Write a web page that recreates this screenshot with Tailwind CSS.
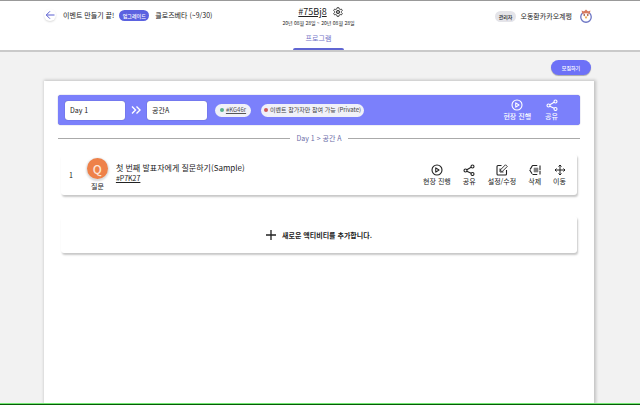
<!DOCTYPE html>
<html lang="ko">
<head>
<meta charset="utf-8">
<meta name="viewport" content="width=device-width, initial-scale=1">
<title>프로그램</title>
<script src="https://cdn.jsdelivr.net/npm/@tailwindcss/browser@4"></script>
</head>
<body class="flex min-h-screen flex-col bg-[#f2f2f2] font-['Noto_Sans_CJK_KR','Noto_Sans',sans-serif] text-[7px] leading-[10px] text-[#222]">
<svg class="hidden" aria-hidden="true">
  <symbol id="play" viewBox="0 0 24 24" fill="none" stroke="currentColor" stroke-width="2.2"><circle cx="12" cy="12" r="10"/><path d="M9.5 7.8v8.4l6.5-4.2z" stroke-linejoin="round"/></symbol>
  <symbol id="share" viewBox="0 0 24 24" fill="none" stroke="currentColor" stroke-width="2.2"><circle cx="5" cy="13" r="3"/><circle cx="19" cy="5" r="3"/><circle cx="19" cy="20" r="3"/><path d="M7.7 11.5 16.3 6.5M7.6 14.5l8.8 4"/></symbol>
</svg>

<header class="border-t border-b-2 border-t-[#999] border-b-[#cacaca] bg-white">
  <div class="grid grid-cols-[1fr_auto_1fr] items-start pr-[47px] pl-11">
    <div class="flex items-center pt-2 leading-[12px]">
      <button type="button" aria-label="뒤로" class="flex size-3 items-center justify-center rounded-full text-[#5a5fd0] shadow-[0_1px_2px_rgba(0,0,0,0.15)]">
        <svg class="size-[10px]" viewBox="0 0 20 20" fill="none" stroke="currentColor" stroke-width="2"><path d="M19 10H3M10 2.500 2.500 10l7.500 7.500"/></svg>
      </button>
      <span class="ml-[7px] whitespace-nowrap">이벤트 만들기 끝!</span>
      <button type="button" class="ml-[5px] h-[11px] w-[30px] rounded-full bg-[#5b62e0] text-[5px] leading-[11px] font-medium whitespace-nowrap text-white">업그레이드</button>
      <span class="ml-[6px] whitespace-nowrap">클로즈베타 (~9/30)</span>
    </div>
    <div class="flex flex-col items-center">
      <div class="flex items-center gap-[6px] pt-1 pl-1">
        <a href="#" class="text-[9px] leading-[14px] underline underline-offset-1">#75Bj8</a>
        <button type="button" aria-label="설정" class="size-[10px]">
          <svg class="size-[10px]" viewBox="0 0 24 24" fill="none" stroke="currentColor" stroke-width="2"><path d="M10 1.500h4l.8 3 2.500 1.400 3-.8 2 3.400L20.200 10.700v2.600l2.100 2.200-2 3.400-3-.8-2.500 1.400-.8 3h-4l-.8-3-2.500-1.400-3 .8-2-3.400 2.100-2.200v-2.600L1.700 8.500l2-3.400 3 .8 2.500-1.400z"/><circle cx="12" cy="12" r="4"/><circle cx="12" cy="12" r="1"/></svg>
        </button>
      </div>
      <p class="text-[5px] leading-[7px] whitespace-nowrap">20년 08월 28일 ~ 20년 08월 28일</p>
      <nav class="mt-[7px]">
        <a href="#" class="flex w-[51px] flex-col items-center gap-[5px] text-[#7374c8]">
          <span>프로그램</span>
          <span class="h-[2px] w-full rounded-t-sm bg-[#6066d2]"></span>
        </a>
      </nav>
    </div>
    <div class="flex items-center justify-end pt-2 leading-[12px]">
      <span class="rounded-full bg-[#e4e4e9] px-1 text-[5px] leading-[11px] font-medium whitespace-nowrap">관리자</span>
      <span class="ml-1 whitespace-nowrap">오동환카카오계쩡</span>
      <svg class="ml-[7px] size-[14px]" viewBox="0 0 28 28" aria-hidden="true"><circle cx="14" cy="16" r="10.500" fill="#fff" stroke="#6d76c4" stroke-width="2.600"/><path d="M5 3l5 2 4-4 4 4 5-2-2 7q-7-3-14 0z" fill="#d97b5e"/><circle cx="10.500" cy="12" r="1.800" fill="#a8644e"/><circle cx="17.500" cy="12" r="1.800" fill="#a8644e"/><path d="M11 15h6l-3 5z" fill="#e9a94b"/></svg>
    </div>
  </div>
</header>

<main class="flex grow flex-col pr-[46px] pl-11">
  <div class="flex justify-end pt-2 pr-[3px] pb-[6px]">
    <button type="button" class="h-[15px] w-10 rounded-full bg-[#6d71f7] text-[5px] leading-[15px] font-medium text-white shadow-[0_1px_1px_rgba(0,0,0,0.3)]">모집하기</button>
  </div>

  <div class="grow bg-white px-[14px] pt-[14px] shadow-[1px_0_3px_1px_rgba(0,0,0,0.2)]">
    <section class="flex h-[30px] items-center rounded-[3px] bg-[#7b80fb] pr-[22px] pl-[7px] shadow-[0_0_1px_rgba(60,60,140,0.8)]">
      <input aria-label="일차" value="Day 1" class="h-[19px] w-[60px] rounded-[3px] bg-white px-[5px] text-[7px] shadow-[0_0_1px_rgba(0,0,0,0.5)]">
      <svg class="mx-[6px] size-[10px] text-white" viewBox="0 0 20 20" fill="none" stroke="currentColor" stroke-width="2.800" aria-hidden="true"><path d="M2 3l7 7-7 7M11 3l7 7-7 7"/></svg>
      <input aria-label="공간" value="공간A" class="h-[19px] w-[60px] rounded-[3px] bg-white px-[5px] text-[7px] shadow-[0_0_1px_rgba(0,0,0,0.5)]">
      <a href="#" class="ml-2 flex h-[13px] w-9 items-center justify-center gap-[2px] rounded-full bg-[#f0f1f8] text-[6px] text-[#555]"><span class="size-1 rounded-full bg-[#55b08c]"></span><span class="underline">#KG46r</span></a>
      <span class="ml-[10px] flex h-[13px] w-[103px] items-center justify-center gap-[2px] rounded-full bg-[#f0f1f8] text-[6px] whitespace-nowrap text-[#444]"><span class="size-1 rounded-full bg-[#cf5a5a]"></span>이벤트 참가자만 참여 가능 (Private)</span>
      <div class="ml-auto flex gap-[14px] font-medium whitespace-nowrap text-white">
        <button type="button" class="flex flex-col items-center"><svg class="size-3"><use href="#play"/></svg>현장 진행</button>
        <button type="button" class="flex flex-col items-center"><svg class="size-3"><use href="#share"/></svg>공유</button>
      </div>
    </section>

    <h2 class="mt-2 flex items-center gap-[6px] text-[7px] text-[#6c6da8]"><span class="h-px grow bg-[#aaa]"></span>Day 1 &gt; 공간 A<span class="h-px grow bg-[#aaa]"></span></h2>

    <article class="mx-[3px] mt-[11px] flex h-[41px] items-center rounded-[3px] bg-white pr-[11px] pl-2 shadow-[1px_2px_2px_rgba(0,0,0,0.22)]">
      <span>1</span>
      <div class="ml-[14px] flex flex-col items-center gap-[2px]">
        <span class="flex size-[21px] items-center justify-center rounded-full bg-[#ee8149] text-[12px] leading-[20px] font-medium text-[#fde6d8] shadow-[0_1px_2px_1px_rgba(0,0,0,0.15)]">Q</span>
        <span>질문</span>
      </div>
      <div class="mb-1 ml-2">
        <h3 class="text-[8px] leading-[10px] whitespace-nowrap">첫 번째 발표자에게 질문하기(Sample)</h3>
        <a href="#" class="block leading-[10px] underline">#P7K27</a>
      </div>
      <div class="ml-auto flex gap-3 whitespace-nowrap">
        <button type="button" class="flex flex-col items-center"><svg class="size-3"><use href="#play"/></svg>현장 진행</button>
        <button type="button" class="flex flex-col items-center"><svg class="size-3"><use href="#share"/></svg>공유</button>
        <button type="button" class="flex flex-col items-center"><svg class="size-3" viewBox="0 0 24 24" fill="none" stroke="currentColor" stroke-width="2.200"><path d="M11 3H4a2 2 0 0 0-2 2v15a2 2 0 0 0 2 2h15a2 2 0 0 0 2-2v-8"/><path d="M19 1.500 22.500 5 12 15.500 8.500 12zM8 9v7h7" stroke-width="1.800"/></svg>설정/수정</button>
        <button type="button" class="flex flex-col items-center"><svg class="size-3" viewBox="0 0 24 24" fill="none" stroke="currentColor" stroke-width="2.200"><path d="M7 3H18M7 21H18M22 3v18M7 3 1.500 12 7 21" stroke-dasharray="9 1.500"/><path d="M9 10h10M9 14h10M12 7v10M16 7v10" stroke-width="1.400"/></svg>삭제</button>
        <button type="button" class="flex flex-col items-center"><svg class="size-3" viewBox="0 0 24 24" fill="none" stroke="currentColor" stroke-width="2"><path d="M12 3v18M3 12h18"/><path d="M9 5l3-3 3 3M9 19l3 3 3-3M5 9l-3 3 3 3M19 9l3 3-3 3"/></svg>이동</button>
      </div>
    </article>

    <button type="button" class="mx-[3px] mt-[21px] flex h-[37px] w-[calc(100%-6px)] items-center justify-center gap-[6px] rounded-[3px] bg-white text-[7px] font-bold shadow-[1px_2px_2px_rgba(0,0,0,0.22)]">
      <svg class="size-[10px]" viewBox="0 0 20 20" fill="none" stroke="currentColor" stroke-width="2.600" aria-hidden="true"><path d="M10 0v20M0 10h20"/></svg>
      새로운 액티비티를 추가합니다.
    </button>
  </div>
</main>
<footer class="relative h-[2px] border-t border-[#74e874] bg-[#075c07]"></footer>
</body>
</html>
